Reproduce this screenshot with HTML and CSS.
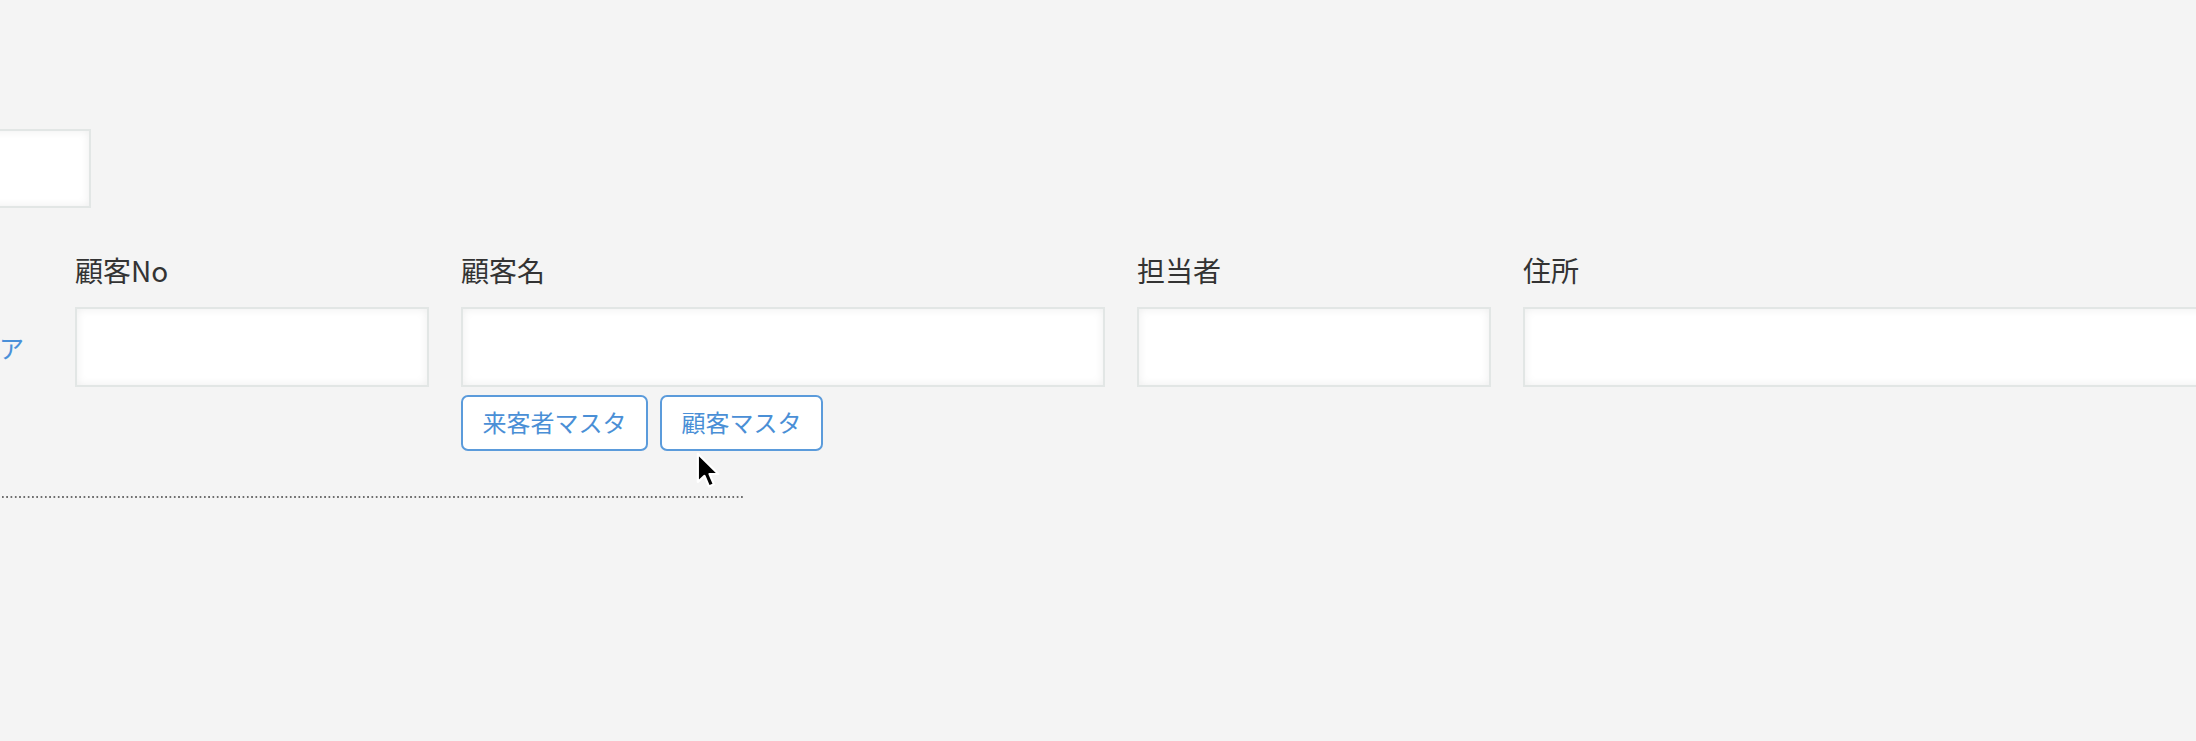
FILE: index.html
```html
<!DOCTYPE html>
<html lang="ja">
<head>
<meta charset="utf-8">
<title>顧客検索</title>
<link rel="stylesheet" href="styles.css">
</head>
<body>
<div class="page">
  <div class="toolbar">
    <input class="text-input keyword" type="text">
  </div>
  <div class="filters">
    <div class="clear-cell"><a class="clear" href="#">クリア</a></div>
    <div class="field field-no">
      <label class="field-label">顧客No</label>
      <input class="text-input" type="text">
    </div>
    <div class="field field-name">
      <label class="field-label">顧客名</label>
      <input class="text-input" type="text">
      <div class="btn-row">
        <button class="btn-outline" type="button">来客者マスタ</button>
        <button class="btn-outline" type="button">顧客マスタ</button>
      </div>
    </div>
    <div class="field field-staff">
      <label class="field-label">担当者</label>
      <input class="text-input" type="text">
    </div>
    <div class="field field-address">
      <label class="field-label">住所</label>
      <input class="text-input" type="text">
    </div>
  </div>
  <div class="divider"></div>
</div>
<svg class="cursor" width="27" height="40" viewBox="0 0 24 36" xmlns="http://www.w3.org/2000/svg">
  <path d="M1.5 1.5 L1.5 27 L7.5 21.5 L11.5 31 L16 29 L12 19.8 L20 19.8 Z" fill="#000" stroke="#fff" stroke-width="2" stroke-linejoin="round"/>
</svg>
</body>
</html>
```
FILE: styles.css
```css
html, body {
  margin: 0;
  padding: 0;
}
body {
  background: #f4f4f4;
  font-family: "Noto Sans CJK JP", "Noto Sans", sans-serif;
  color: #333;
  width: 2196px;
  height: 741px;
  overflow: hidden;
  position: relative;
}
.page {
  margin-left: -200px;
  padding-top: 129px;
}
.toolbar {
  display: flex;
}
.text-input {
  box-sizing: border-box;
  height: 80px;
  background: #fff;
  border: 2px solid #e2e6e5;
  border-radius: 0;
  box-shadow: inset 0 0 10px rgba(0, 0, 0, 0.07);
  outline: none;
  margin: 0;
  padding: 0 12px;
  font: inherit;
}
.keyword {
  width: 291px;
  height: 79px;
  flex-shrink: 0;
}
.filters {
  display: flex;
  gap: 32px;
  margin-top: 42px;
  align-items: flex-start;
}
.filters > * {
  flex-shrink: 0;
}
.clear-cell {
  box-sizing: border-box;
  width: 243px;
  height: 80px;
  margin-top: 57px;
  display: flex;
  align-items: center;
  justify-content: flex-end;
  padding-right: 19px;
}
.clear {
  color: #4a90d9;
  font-size: 25px;
  line-height: 1;
  text-decoration: none;
  white-space: nowrap;
}
.field {
  display: flex;
  flex-direction: column;
}
.field-label {
  font-size: 28px;
  line-height: 40px;
  margin-bottom: 17px;
  color: #333;
  white-space: nowrap;
}
.field-no { width: 354px; }
.field-name { width: 644px; }
.field-staff { width: 354px; }
.field-address { width: 800px; }
.field .text-input { width: 100%; }
.btn-row {
  display: flex;
  gap: 12px;
  margin-top: 8px;
}
.btn-outline {
  box-sizing: border-box;
  height: 56px;
  padding: 0 19.5px 2px;
  background: #fff;
  border: 2px solid #5b9bdb;
  border-radius: 7px;
  color: #4a8fd6;
  font-family: "Noto Sans CJK JP", "Noto Sans", sans-serif;
  font-size: 24px;
  line-height: 1;
  white-space: nowrap;
  cursor: pointer;
}
.divider {
  width: 945px;
  height: 2px;
  margin-top: 45px;
  background-image: linear-gradient(to right, #6e6e6e 45%, transparent 45%);
  background-size: 4.3px 2px;
  background-repeat: repeat-x;
}
.cursor {
  position: absolute;
  left: 696px;
  top: 452px;
}
```
